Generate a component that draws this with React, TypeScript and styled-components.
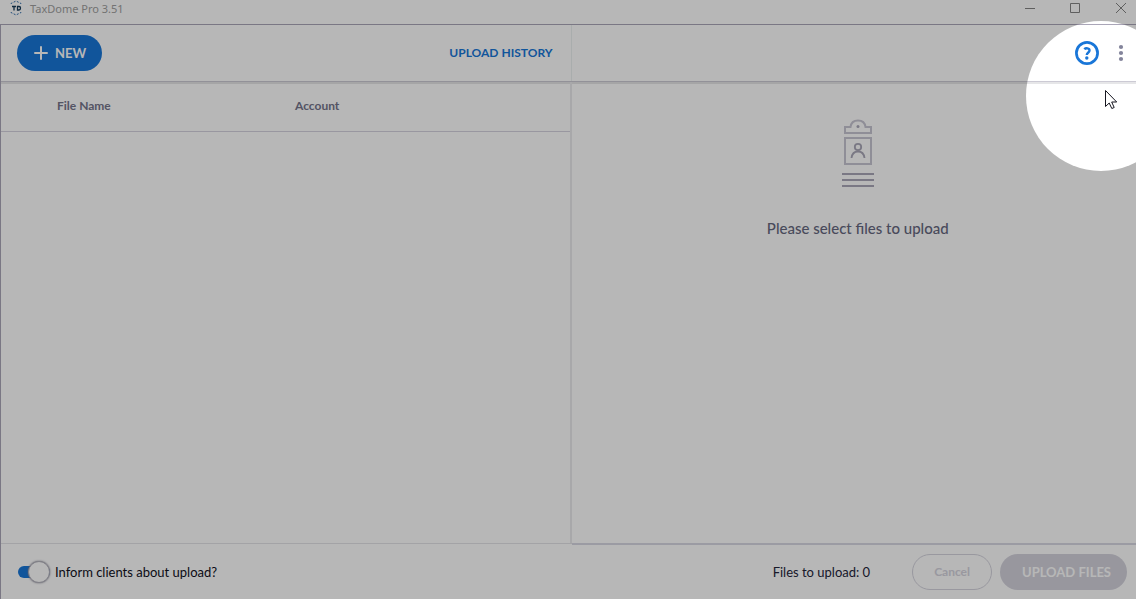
import React from "react";
import styled, { createGlobalStyle } from "styled-components";

const GlobalStyle = createGlobalStyle`
  *, *::before, *::after { box-sizing: border-box; }
  html, body { margin: 0; }
  body {
    background: #fff;
    color: #24253a;
    font-family: Lato, "Liberation Sans", sans-serif;
    font-size: 13px;
    line-height: 20px;
  }
  button { font: inherit; border: 0; padding: 0; background: none; cursor: pointer; }
`;

const Window = styled.div`
  position: relative;
  display: flex;
  flex-direction: column;
  min-height: 100vh;
  overflow: hidden;
`;

const TitleBar = styled.header`
  display: flex;
  align-items: flex-start;
  height: 24px;
  padding: 0 5px 0 9px;
  font-family: "Noto Sans", "Open Sans", sans-serif;
  font-size: 11px;
  line-height: 18px;
  color: #a0a0a0;
`;

const Title = styled.span`
  flex: 1;
  margin-left: 7px;
`;

const WindowControls = styled.div`
  display: flex;
  gap: 29px;
`;

const WindowButton = styled.button`
  display: flex;
  width: 17px;
  height: 17px;
  color: #858585;
`;

const Frame = styled.main`
  flex: 1;
  display: flex;
  flex-direction: column;
  border-top: 1px solid #aaa6b8;
  border-left: 1px solid #aaa6b8;
`;

const Columns = styled.div`
  display: grid;
  grid-template-columns: calc(50% + 3px) 1fr;
`;

const Toolbar = styled(Columns)`
  height: 57px;
  border-bottom: 1px solid #cccad4;
  box-shadow: 0 2px #e6e6e8;
`;

const ToolbarSide = styled.div<{ $end?: boolean }>`
  display: flex;
  align-items: center;
  justify-content: ${(p) => (p.$end ? "flex-end" : "space-between")};
  gap: 14px;
  padding: ${(p) => (p.$end ? "0 7px 0 16px" : "0 18px 0 16px")};
  border-right: ${(p) => (p.$end ? "0" : "1px solid #ecf2f2")};
`;

const NewButton = styled.button`
  display: flex;
  align-items: center;
  gap: 7px;
  height: 36px;
  padding: 0 16px;
  border-radius: 18px;
  background: #1877d8;
  color: #fff;
  font-weight: 700;
`;

const HistoryLink = styled.a`
  color: #1877d8;
  font-size: 12px;
  font-weight: 700;
  text-decoration: none;
`;

const IconButton = styled.button`
  display: flex;
  color: #1976d8;
`;

const Content = styled(Columns)`
  flex: 1;
`;

const FilesPane = styled.section`
  padding-top: 2px;
  border-right: 2px solid #ebebed;
`;

const FileTable = styled.table`
  width: 100%;
  border-collapse: collapse;
  table-layout: fixed;
`;

const HeadCell = styled.th<{ $first?: boolean }>`
  width: ${(p) => (p.$first ? "294px" : "auto")};
  height: 47px;
  padding: 0 0 2px ${(p) => (p.$first ? "56px" : "0")};
  border-bottom: 1px solid #d5d3df;
  color: #75758c;
  font-size: 12px;
  font-weight: 700;
  text-align: left;
`;

const EmptyPane = styled.section`
  display: flex;
  flex-direction: column;
  align-items: center;
  gap: 29px;
  padding: 37px 0 0 8px;
`;

const EmptyText = styled.p`
  margin: 0;
  color: #66687f;
  font-size: 15px;
  font-weight: 500;
`;

const Footer = styled(Columns)`
  height: 56px;
`;

const FooterSide = styled.div<{ $end?: boolean }>`
  display: flex;
  align-items: center;
  justify-content: ${(p) => (p.$end ? "flex-end" : "flex-start")};
  gap: 8px;
  padding: 0 9px 0 17px;
  border-top: ${(p) => (p.$end ? "2px solid #d9d8e3" : "1px solid #e4e4e7")};
`;

const SwitchLabel = styled.label`
  display: flex;
  align-items: center;
  gap: 5px;
  padding-top: 1px;
  color: #10101c;
`;

const Switch = styled.input`
  appearance: none;
  position: relative;
  width: 32px;
  height: 12px;
  margin: 0;
  border-radius: 6px;
  background: #1877d8;
  &::before {
    content: "";
    position: absolute;
    top: -5px;
    right: 0;
    width: 22px;
    height: 22px;
    border: 1px solid #b4b3bd;
    border-radius: 50%;
    background: #fff;
    box-shadow: 0 0 2px #7c7b8b;
  }
`;

const Count = styled.span`
  margin-right: 34px;
  color: #24253a;
`;

const PillButton = styled.button<{ $filled?: boolean }>`
  height: 36px;
  padding: ${(p) => (p.$filled ? "0 16px 0 22px" : "0 21px")};
  border: ${(p) => (p.$filled ? "0" : "1px solid #d5d4de")};
  border-radius: 18px;
  background: ${(p) => (p.$filled ? "#d4d3dd" : "transparent")};
  color: ${(p) => (p.$filled ? "#fff" : "#d5d4de")};
  font-size: ${(p) => (p.$filled ? "13px" : "12px")};
  font-weight: 700;
`;

const Spotlight = styled.div`
  position: absolute;
  top: 21px;
  right: -40px;
  width: 150px;
  height: 150px;
  border-radius: 50%;
  box-shadow: 0 0 0 3000px rgba(0, 0, 0, 0.284);
  pointer-events: none;
`;

const Pointer = styled.svg`
  position: absolute;
  top: 89px;
  right: 18px;
  pointer-events: none;
`;

const Logo = () => (
  <svg width="14" height="17" viewBox="0 0 14 17" aria-hidden="true">
    <path d="M2 4V3.500L7 1l5 2.500V4M2 12v.5L7 15l5-2.500V12" fill="none" stroke="#3470ad" strokeWidth="1" strokeDasharray="2 1.500" />
    <path d="M3 6.500h4M5 6.500v4M8.500 6.500h1.500q1.500 0 1.500 1.500 0 2-1.500 2H8.500z" fill="none" stroke="#163a59" strokeWidth="1.300" />
  </svg>
);

const Clipboard = () => (
  <svg width="34" height="70" viewBox="0 0 34 70" fill="none" aria-hidden="true">
    <path d="M4 8h5.500c.5-4 3.500-6.500 7.500-6.500S24 4 24.500 8H30v6H4z" stroke="#c8c6d3" strokeWidth="2" />
    <circle cx="17" cy="7.500" r="1.500" fill="#aaa8b8" />
    <path d="M4 19h26v26H4z" stroke="#c8c6d3" strokeWidth="2" />
    <circle cx="17" cy="28" r="3.200" stroke="#aaa8b8" strokeWidth="1.800" />
    <path d="M10.500 39c.5-4 3-6.500 6.500-6.500s6 2.500 6.500 6.500" stroke="#aaa8b8" strokeWidth="1.800" />
    <path d="M1 55h32M1 61h32M1 67h32" stroke="#aaa8b8" strokeWidth="2" />
  </svg>
);

export default function App() {
  return (
    <>
      <GlobalStyle />
      <Window>
        <TitleBar>
          <Logo />
          <Title>TaxDome Pro 3.51</Title>
          <WindowControls>
            <WindowButton aria-label="Minimize">
              <svg width="17" height="17" fill="none" stroke="currentColor"><path d="M3 8.500h10" /></svg>
            </WindowButton>
            <WindowButton aria-label="Maximize">
              <svg width="17" height="17" fill="none" stroke="currentColor"><path d="M2.500 3.500h9v9h-9z" /></svg>
            </WindowButton>
            <WindowButton aria-label="Close">
              <svg width="17" height="17" fill="none" stroke="currentColor"><path d="M2 3l10 10M12 3L2 13" /></svg>
            </WindowButton>
          </WindowControls>
        </TitleBar>
        <Frame>
          <Toolbar>
            <ToolbarSide>
              <NewButton>
                <svg width="15" height="14" fill="none" stroke="currentColor" strokeWidth="2" strokeLinecap="round" aria-hidden="true">
                  <path d="M2 7h12M8 1v12" />
                </svg>
                NEW
              </NewButton>
              <HistoryLink href="#history">UPLOAD HISTORY</HistoryLink>
            </ToolbarSide>
            <ToolbarSide $end>
              <IconButton aria-label="Help">
                <svg width="24" height="24" fill="none" stroke="currentColor">
                  <circle cx="12" cy="12" r="10.600" strokeWidth="2.700" />
                  <path d="M9.300 8.300c1.500-1.600 5.300-1.300 5.200 1.200 0 2-2.700 2-2.700 4.500" strokeWidth="2.400" />
                  <circle cx="11.800" cy="17" r="1.700" fill="currentColor" stroke="none" />
                </svg>
              </IconButton>
              <IconButton aria-label="More options">
                <svg width="16" height="18" fill="#83849b">
                  <circle cx="8" cy="3" r="2.100" /><circle cx="8" cy="9" r="2.100" /><circle cx="8" cy="15" r="2.100" />
                </svg>
              </IconButton>
            </ToolbarSide>
          </Toolbar>
          <Content>
            <FilesPane>
              <FileTable>
                <thead>
                  <tr>
                    <HeadCell $first>File Name</HeadCell>
                    <HeadCell>Account</HeadCell>
                  </tr>
                </thead>
              </FileTable>
            </FilesPane>
            <EmptyPane>
              <Clipboard />
              <EmptyText>Please select files to upload</EmptyText>
            </EmptyPane>
          </Content>
          <Footer as="footer">
            <FooterSide>
              <SwitchLabel>
                <Switch type="checkbox" role="switch" defaultChecked />
                Inform clients about upload?
              </SwitchLabel>
            </FooterSide>
            <FooterSide $end>
              <Count>Files to upload: 0</Count>
              <PillButton>Cancel</PillButton>
              <PillButton $filled>UPLOAD FILES</PillButton>
            </FooterSide>
          </Footer>
        </Frame>
        <Spotlight />
        <Pointer width="14" height="22" viewBox="0 0 14 22" aria-hidden="true">
          <path d="M1.500 1.500v16l3.700-3.500 2.600 5.500 2.400-1-2.500-5.500h5z" fill="#fff" stroke="#15151f" />
        </Pointer>
      </Window>
    </>
  );
}
